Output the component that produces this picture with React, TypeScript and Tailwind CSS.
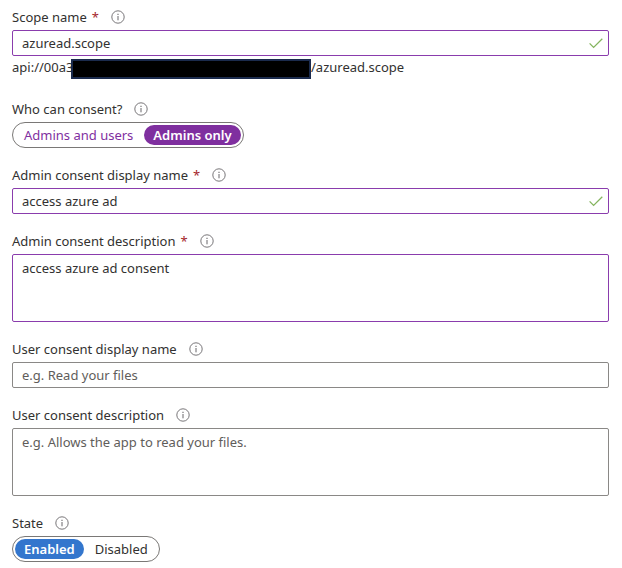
import { useState, type ReactNode } from 'react';
import clsx from 'clsx';

function InfoIcon() {
  return (
    <svg
      width="14"
      height="14"
      viewBox="0 0 14 14"
      fill="none"
      stroke="#69676a"
      aria-hidden="true"
    >
      <circle cx="7" cy="7" r="6.2" strokeWidth="0.9" />
      <path d="M7 6v4.3" strokeWidth="1" />
      <path d="M7 3.8v1.1" strokeWidth="1.1" />
    </svg>
  );
}

function CheckIcon() {
  return (
    <svg
      className="absolute right-1.5 top-2"
      width="14"
      height="11"
      viewBox="0 0 14 11"
      fill="none"
      stroke="#84b45e"
      strokeWidth="1.3"
      aria-hidden="true"
    >
      <path d="M0.6 5.4 4.6 9.4 13.3 0.8" />
    </svg>
  );
}

interface FieldProps {
  label: string;
  id: string;
  required?: boolean;
  children: ReactNode;
}

function Field({ label, id, required, children }: FieldProps) {
  return (
    <div className="flex flex-col gap-[3px]">
      <div className="flex items-center h-5">
        <label id={`${id}-label`} htmlFor={id}>
          {label}
          {required && <span className="ml-[5px] text-[#a4262c]">*</span>}
        </label>
        <span className="ml-3">
          <InfoIcon />
        </span>
      </div>
      {children}
    </div>
  );
}

interface TextProps {
  id: string;
  value?: string;
  placeholder?: string;
  edited?: boolean;
}

function TextInput({ id, value, placeholder, edited }: TextProps) {
  return (
    <div className="relative">
      <input
        id={id}
        type="text"
        defaultValue={value}
        placeholder={placeholder}
        className={clsx(
          'block w-full h-[26px] px-[9px] border rounded-xs outline-none placeholder:text-[#5f5d5b]',
          edited ? 'border-[#8a3cad]' : 'border-[#8a8886]'
        )}
      />
      {edited && <CheckIcon />}
    </div>
  );
}

function TextArea({ id, value, placeholder, edited }: TextProps) {
  return (
    <textarea
      id={id}
      defaultValue={value}
      placeholder={placeholder}
      className={clsx(
        'block w-full h-[68px] px-[9px] py-[3px] border rounded-xs outline-none resize-none placeholder:text-[#5f5d5b]',
        edited ? 'border-[#8a3cad]' : 'border-[#8a8886]'
      )}
    />
  );
}

interface ToggleProps {
  id: string;
  options: string[];
  initial: string;
  selectedClass: string;
  otherClass: string;
}

function Toggle({ id, options, initial, selectedClass, otherClass }: ToggleProps) {
  const [selected, setSelected] = useState(initial);

  return (
    <div
      id={id}
      role="radiogroup"
      aria-labelledby={`${id}-label`}
      className="flex items-center self-start h-[26px] px-0.5 gap-0.5 border border-[#7a7876] rounded-full"
    >
      {options.map((option) => (
        <label
          key={option}
          className={clsx(
            'flex items-center h-5 px-[9px] rounded-full cursor-pointer',
            option === selected ? selectedClass : otherClass
          )}
        >
          <input
            type="radio"
            name={id}
            value={option}
            checked={option === selected}
            onChange={() => setSelected(option)}
            className="sr-only"
          />
          {option}
        </label>
      ))}
    </div>
  );
}

export default function App() {
  return (
    <form className="flex flex-col gap-[17px] pt-[7px] pb-1 pl-3 pr-[13px] bg-white font-['Noto_Sans','Open_Sans',sans-serif] text-[13px] leading-5 text-[#323130]">
      <div className="mb-[3px]">
        <Field label="Scope name" id="scope-name" required>
          <TextInput id="scope-name" value="azuread.scope" edited />
        </Field>
        <div className="flex items-end h-[23px]">
          <span className="w-[59px] h-[22px]">api://00a3</span>
          <span className="relative w-60 h-5 bg-black border-2 border-[#1b2b4d]" />
          <span className="h-[22px]">/azuread.scope</span>
        </div>
      </div>

      <Field label="Who can consent?" id="who-can-consent">
        <Toggle
          id="who-can-consent"
          options={['Admins and users', 'Admins only']}
          initial="Admins only"
          selectedClass="bg-[#7f2f9f] text-white font-semibold"
          otherClass="text-[#7f2f9f]"
        />
      </Field>

      <Field label="Admin consent display name" id="admin-name" required>
        <TextInput id="admin-name" value="access azure ad" edited />
      </Field>

      <Field label="Admin consent description" id="admin-description" required>
        <TextArea id="admin-description" value="access azure ad consent" edited />
      </Field>

      <Field label="User consent display name" id="user-name">
        <TextInput id="user-name" placeholder="e.g. Read your files" />
      </Field>

      <Field label="User consent description" id="user-description">
        <TextArea
          id="user-description"
          placeholder="e.g. Allows the app to read your files."
        />
      </Field>

      <Field label="State" id="state">
        <Toggle
          id="state"
          options={['Enabled', 'Disabled']}
          initial="Enabled"
          selectedClass="bg-[#3376cd] text-white font-semibold"
          otherClass="text-[#323130]"
        />
      </Field>
    </form>
  );
}
